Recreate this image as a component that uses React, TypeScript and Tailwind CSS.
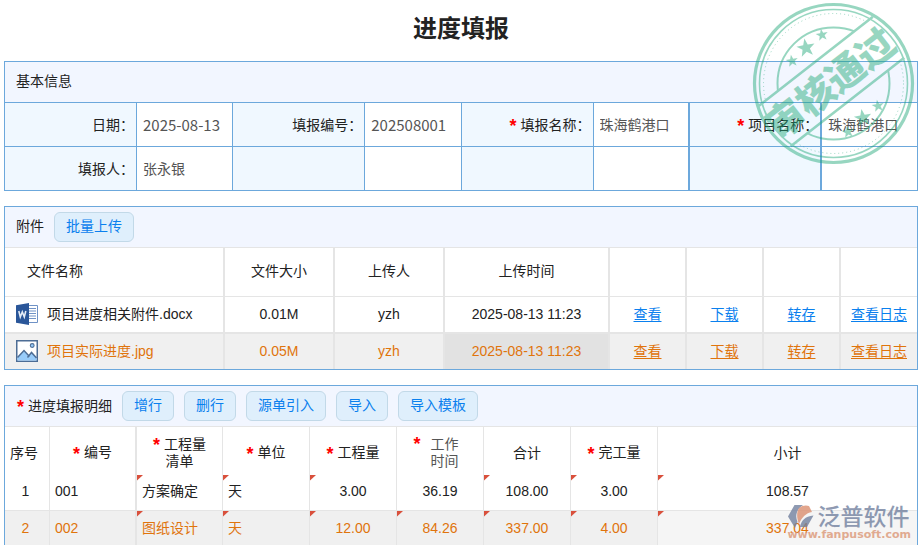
import React from "react";

const FONT = "font-['Liberation_Sans','Noto_Sans_CJK_SC',sans-serif]";

const files = [
  { name: "项目进度相关附件.docx", size: "0.01M", user: "yzh", time: "2025-08-13 11:23", type: "word" },
  { name: "项目实际进度.jpg", size: "0.05M", user: "yzh", time: "2025-08-13 11:23", type: "image" },
];

const fileActions = ["查看", "下载", "转存", "查看日志"];

const rows = [
  { no: "1", code: "001", item: "方案确定", unit: "天", amount: "3.00", hours: "36.19", total: "108.00", done: "3.00", sum: "108.57" },
  { no: "2", code: "002", item: "图纸设计", unit: "天", amount: "12.00", hours: "84.26", total: "337.00", done: "4.00", sum: "337.04" },
];

const Star: React.FC = () => (
  <span className="inline-block h-4 pr-1 align-middle text-lg leading-4 font-bold text-[#ff0000]">*</span>
);

const ToolButton: React.FC<{ children: React.ReactNode }> = ({ children }) => (
  <button type="button" className="h-[30px] rounded-md border border-[#c2d9e8] bg-[#dfeffc] px-[11px] pb-0.5 text-[#0a80ee]">
    {children}
  </button>
);

const Corner: React.FC = () => (
  <svg className="absolute top-0 left-0 h-1.5 w-1.5" viewBox="0 0 6 6" aria-hidden="true">
    <path d="M0 0h6L0 5.5z" fill="#d9503c" />
  </svg>
);

const WordIcon: React.FC = () => (
  <svg className="h-[22px] w-[22px] shrink-0" viewBox="0 0 22 22" aria-hidden="true">
    <path d="M12 2.5h9.5v17H12z" fill="#fff" stroke="#6f92c6" />
    <path d="M13 5.500h7M13 8h7M13 10.500h7M13 13h7M13 15.500h7" stroke="#6f92c6" strokeWidth="1.2" />
    <path d="M0 2.2 13 0v22L0 19.8z" fill="#2a5699" />
    <path d="M2.800 8 4.300 14 6.300 9 8.300 14 9.800 8" fill="none" stroke="#e4ecf7" strokeWidth="1.6" />
  </svg>
);

const ImageIcon: React.FC = () => (
  <svg className="h-[22px] w-[22px] shrink-0" viewBox="0 0 22 22" aria-hidden="true">
    <rect x="0.75" y="0.75" width="20.5" height="20.5" fill="#fff" stroke="#4d6d95" strokeWidth="1.5" />
    <path d="M1.5 17.5 8 10.5l5 5.5 3-3 4.5 4.5v3h-19z" fill="#98ccfa" />
    <path d="M1.5 17.5 8 10.5l5.5 6M11.5 17.5 15.5 12.5l5 5.5" fill="none" stroke="#4d6d95" strokeWidth="1.5" />
    <circle cx="16.2" cy="5.5" r="1.9" fill="#98ccfa" stroke="#4d6d95" strokeWidth="1.1" />
  </svg>
);

const STAR_PATH = "M0-8 1.9-2.6 7.6-2.5 3.1 1 4.7 6.5 0 3.2-4.7 6.5-3.1 1-7.6-2.5-1.9-2.6z";

const Stamp: React.FC = () => (
  <svg className="pointer-events-none absolute top-0 right-1 h-[168px] w-[164px]" viewBox="0 0 164 168" role="img" aria-label="审核通过">
    <defs>
      <clipPath id="outside-band">
        <path d="M-100-100h400v155.500H-100zM-100 107h400v150H-100z" transform="rotate(-38 82 83.5)" />
      </clipPath>
    </defs>
    <g fill="none" stroke="#1fa878" opacity="0.46">
      <circle cx="82.5" cy="83.5" r="79" strokeWidth="3.2" />
      <circle cx="82.5" cy="83.5" r="74" strokeWidth="1.6" />
      <g clipPath="url(#outside-band)">
        <circle cx="82.5" cy="83.5" r="70" strokeWidth="1" strokeDasharray="1 3" />
        <circle cx="82.5" cy="83.5" r="56" strokeWidth="2" />
      </g>
      <path d="M9.5 55.5h145M10 107h144" strokeWidth="2.6" transform="rotate(-38 82 83.5)" />
      <g fill="#1fa878" stroke="none">
        <path d={STAR_PATH} transform="translate(55 48) rotate(-10) scale(1.2)" />
        <path d={STAR_PATH} transform="translate(71 35) rotate(-10) scale(.8)" />
        <path d={STAR_PATH} transform="translate(41 61) rotate(-10) scale(.8)" />
        <path d={STAR_PATH} transform="translate(112 118) rotate(-10) scale(1.15)" />
        <path d={STAR_PATH} transform="translate(127 106) rotate(-10) scale(.8)" />
        <path d={STAR_PATH} transform="translate(97 132) rotate(-10) scale(.8)" />
        <text
          x="80"
          y="96"
          textAnchor="middle"
          fontSize="38"
          fontWeight="900"
          fontFamily="'Noto Sans CJK SC', sans-serif"
          transform="rotate(-38 82 83.5)"
        >
          审核通过
        </text>
      </g>
    </g>
  </svg>
);

const Watermark: React.FC = () => (
  <div className="pointer-events-none absolute right-2 bottom-1 flex flex-col opacity-80">
    <div className="flex h-6 items-center gap-0.5">
      <svg className="h-6 w-[28px]" viewBox="0 0 26 24" aria-hidden="true">
        <path d="M6.500 0H15C8 5 7 11 9.500 17L7 23 0 11.500z" fill="#73819f" />
        <path d="M11 3C14 0 19 0 21 1l3 6C18 8 14 12 11 19 8.500 13 8.500 7 11 3z" fill="#dc8f70" />
        <path d="M25.500 10.500 19 22h-7c1-6 5-11 13.500-11.500z" fill="#73819f" />
      </svg>
      <span className="text-[23px] leading-6 font-medium text-[#73819f]">泛普软件</span>
    </div>
    <span className="text-right font-['DejaVu_Sans',sans-serif] text-[11px] leading-3 font-bold text-[#dc9878]">www.fanpusoft.com</span>
  </div>
);

type FieldProps = { id?: string; label?: string; value?: string; required?: boolean; numeric?: boolean; thick?: boolean };

const Field: React.FC<FieldProps> = ({ id, label, value, required, numeric, thick }) => (
  <>
    <th className={`h-11 border border-[#6ca8dc] bg-[#f0f8ff] p-0 pr-0.5 text-right font-normal whitespace-nowrap ${thick ? "border-x-2" : ""}`}>
      {label && (
        <label htmlFor={id}>
          {required && <Star />}
          {label}：
        </label>
      )}
    </th>
    <td className="h-11 border border-[#6ca8dc] p-0">
      {value && (
        <input
          id={id}
          type="text"
          defaultValue={value}
          className={`block w-full bg-transparent pl-1.5 text-[#555] outline-none ${numeric ? "font-['Noto_Sans_CJK_SC',sans-serif] text-[15px]" : ""}`}
        />
      )}
    </td>
  </>
);

const BasicInfo: React.FC = () => (
  <section>
    <h2 className="flex h-[41px] items-center border border-b-0 border-[#6ca8dc] bg-[#f2f6ff] pb-0.5 pl-[11px]">基本信息</h2>
    <table className="w-full table-fixed border-collapse">
      <colgroup>
        <col className="w-[132px]" />
        <col />
        <col className="w-[132px]" />
        <col />
        <col className="w-[132px]" />
        <col />
        <col className="w-[132px]" />
        <col />
      </colgroup>
      <tbody>
        <tr>
          <Field id="date" label="日期" value="2025-08-13" numeric />
          <Field id="number" label="填报编号" value="202508001" numeric />
          <Field id="title" label="填报名称" value="珠海鹤港口" required />
          <Field id="project" label="项目名称" value="珠海鹤港口" required thick />
        </tr>
        <tr>
          <Field id="reporter" label="填报人" value="张永银" />
          <Field />
          <Field />
          <Field thick />
        </tr>
      </tbody>
    </table>
  </section>
);

const Attachments: React.FC = () => (
  <section className="mt-[15px] border border-[#6ca8dc]">
    <div className="flex h-10 items-center gap-2.5 bg-[#f2f6ff] pl-[11px]">
      <h2 className="pb-0.5">附件</h2>
      <ToolButton>批量上传</ToolButton>
    </div>
    <table className="w-full table-fixed border-separate border-spacing-0 border-t border-[#e5e5e5] text-center">
      <colgroup>
        <col />
        <col className="w-[110px]" />
        <col className="w-[110px]" />
        <col className="w-[165px]" />
        <col className="w-[77px]" />
        <col className="w-[77px]" />
        <col className="w-[77px]" />
        <col className="w-[76px]" />
      </colgroup>
      <thead>
        <tr className="h-[49px] *:border-r-2 *:border-b *:border-[#e5e5e5] *:p-0 *:pb-0.5 *:font-normal *:last:border-r-0">
          <th className="text-left"><span className="pl-[22px]">文件名称</span></th>
          <th>文件大小</th>
          <th>上传人</th>
          <th>上传时间</th>
          <th />
          <th />
          <th />
          <th />
        </tr>
      </thead>
      <tbody>
        {files.map((file, i) => {
          const active = i === 1;
          return (
            <tr
              key={file.name}
              className={`*:border-r-2 *:border-[#e5e5e5] *:p-0 *:pb-0.5 *:last:border-r-0 ${active ? "h-[35px] bg-[#f0f0f0] text-[#e0740c]" : "h-[37px] *:border-b-2"}`}
            >
              <td>
                <div className="flex items-center gap-[9px] pl-[11px]">
                  {file.type === "word" ? <WordIcon /> : <ImageIcon />}
                  {file.name}
                </div>
              </td>
              <td>{file.size}</td>
              <td>{file.user}</td>
              <td className={active ? "bg-[#e2e2e2]" : ""}>{file.time}</td>
              {fileActions.map(action => (
                <td key={action}>
                  <a href="#" className={`underline underline-offset-2 ${active ? "" : "text-[#0a80ee]"}`}>{action}</a>
                </td>
              ))}
            </tr>
          );
        })}
      </tbody>
    </table>
  </section>
);

const Details: React.FC = () => (
  <section className="mt-[15px] border border-b-0 border-[#6ca8dc]">
    <div className="flex h-10 items-center gap-2.5 bg-[#f2f6ff] pl-3">
      <h2><Star />进度填报明细</h2>
      <ToolButton>增行</ToolButton>
      <ToolButton>删行</ToolButton>
      <ToolButton>源单引入</ToolButton>
      <ToolButton>导入</ToolButton>
      <ToolButton>导入模板</ToolButton>
    </div>
    <table className="w-full table-fixed border-separate border-spacing-0 border-t border-[#e5e5e5] text-center">
      <colgroup>
        <col className="w-[45px]" />
        <col className="w-[87px]" />
        <col className="w-[86px]" />
        <col className="w-[87px]" />
        <col className="w-[87px]" />
        <col className="w-[87px]" />
        <col className="w-[87px]" />
        <col className="w-[87px]" />
        <col />
      </colgroup>
      <thead>
        <tr className="h-12 *:border-r *:border-[#e5e5e5] *:p-0 *:pt-1 *:leading-[17px] *:font-normal *:last:border-r-0 *:nth-2:border-r-2">
          <th><span className="pr-1.5">序号</span></th>
          <th><Star />编号</th>
          <th><Star />工程量<br />清单</th>
          <th><Star />单位</th>
          <th><Star />工程量</th>
          <th className="text-[#555]">
            <div className="flex justify-center gap-1.5 pr-2">
              <Star />
              <span>工作<br />时间</span>
            </div>
          </th>
          <th>合计</th>
          <th><Star />完工量</th>
          <th>小计</th>
        </tr>
      </thead>
      <tbody>
        {rows.map((row, i) => {
          const active = i === 1;
          return (
            <tr
              key={row.no}
              className={`*:relative *:border-r *:border-[#e5e5e5] *:p-0 *:last:border-r-0 *:nth-2:border-r-2 ${active ? "h-[34px] bg-[#f0f0f0] text-[#e0740c]" : "h-9 *:border-b *:pb-[3px]"}`}
            >
              <td><span className="pr-[3px]">{row.no}</span></td>
              <td className="text-left"><span className="pl-[5px]">{row.code}</span></td>
              <td className="text-left"><Corner /><span className="pl-[5px]">{row.item}</span></td>
              <td className="text-left"><Corner /><span className="pl-[5px]">{row.unit}</span></td>
              <td><Corner />{row.amount}</td>
              <td>{active && <Corner />}{row.hours}</td>
              <td><Corner />{row.total}</td>
              <td><Corner />{row.done}</td>
              <td className={active ? "bg-[#f5f5f5]" : ""}><Corner />{row.sum}</td>
            </tr>
          );
        })}
      </tbody>
    </table>
  </section>
);

const App: React.FC = () => {
  return (
    <main className={`relative bg-white pr-px pl-1 text-sm text-[#222] ${FONT}`}>
      <h1 className="flex h-[61px] items-center justify-center pb-1 text-2xl font-bold">进度填报</h1>
      <BasicInfo />
      <Attachments />
      <Details />
      <Stamp />
      <Watermark />
    </main>
  );
};

export default App;
